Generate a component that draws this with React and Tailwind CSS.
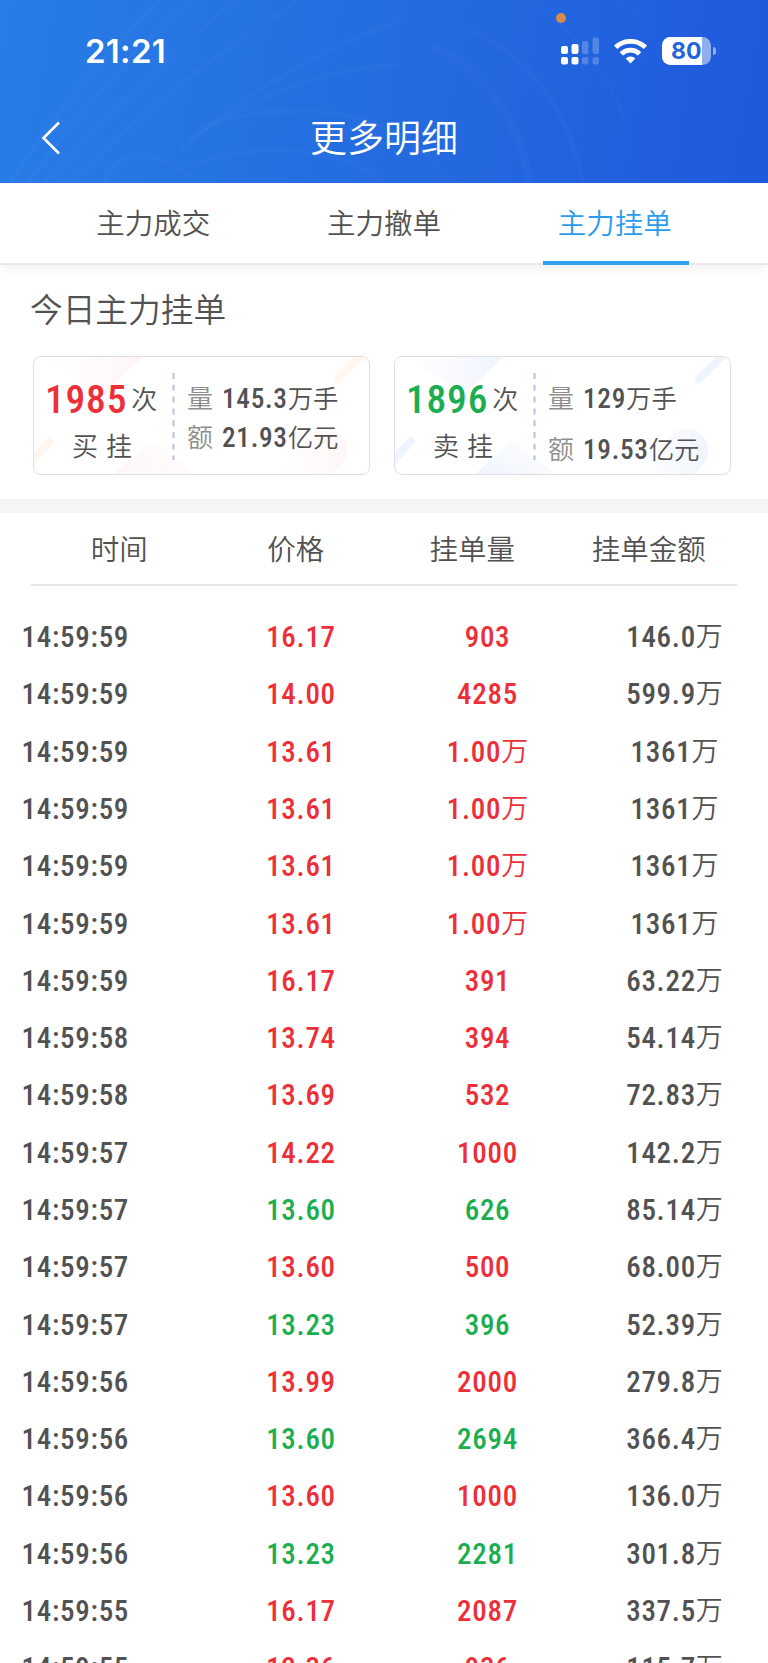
import React, { useState } from 'react';

const tabs = ['主力成交', '主力撤单', '主力挂单'];

const columns = ['时间', '价格', '挂单量', '挂单金额'];

const orders = [
  { time: '14:59:59', price: '16.17', volume: '903', amount: '146.0万', side: 'buy' },
  { time: '14:59:59', price: '14.00', volume: '4285', amount: '599.9万', side: 'buy' },
  { time: '14:59:59', price: '13.61', volume: '1.00万', amount: '1361万', side: 'buy' },
  { time: '14:59:59', price: '13.61', volume: '1.00万', amount: '1361万', side: 'buy' },
  { time: '14:59:59', price: '13.61', volume: '1.00万', amount: '1361万', side: 'buy' },
  { time: '14:59:59', price: '13.61', volume: '1.00万', amount: '1361万', side: 'buy' },
  { time: '14:59:59', price: '16.17', volume: '391', amount: '63.22万', side: 'buy' },
  { time: '14:59:58', price: '13.74', volume: '394', amount: '54.14万', side: 'buy' },
  { time: '14:59:58', price: '13.69', volume: '532', amount: '72.83万', side: 'buy' },
  { time: '14:59:57', price: '14.22', volume: '1000', amount: '142.2万', side: 'buy' },
  { time: '14:59:57', price: '13.60', volume: '626', amount: '85.14万', side: 'sell' },
  { time: '14:59:57', price: '13.60', volume: '500', amount: '68.00万', side: 'buy' },
  { time: '14:59:57', price: '13.23', volume: '396', amount: '52.39万', side: 'sell' },
  { time: '14:59:56', price: '13.99', volume: '2000', amount: '279.8万', side: 'buy' },
  { time: '14:59:56', price: '13.60', volume: '2694', amount: '366.4万', side: 'sell' },
  { time: '14:59:56', price: '13.60', volume: '1000', amount: '136.0万', side: 'buy' },
  { time: '14:59:56', price: '13.23', volume: '2281', amount: '301.8万', side: 'sell' },
  { time: '14:59:55', price: '16.17', volume: '2087', amount: '337.5万', side: 'buy' },
  { time: '14:59:55', price: '12.36', volume: '936', amount: '115.7万', side: 'buy' },
];

// Condensed Roboto digits, the unit behind them in the light CJK face
function Amount({ value }) {
  const [, digits, unit] = value.match(/^([\d.:]+)(.*)$/);
  return (
    <span className="inline-flex items-center">
      <span className="font-[Roboto,sans-serif] font-medium tracking-[0.025em] [font-stretch:85%]">{digits}</span>
      {unit && <span className="-mt-[4px] text-[0.93em] font-[350]">{unit}</span>}
    </span>
  );
}

function StatusBar() {
  return (
    <div className="relative flex h-[96px] items-center justify-between pl-[85px] pr-[52px] pt-[6px]">
      <span className="font-[Inter,sans-serif] text-[33px] font-semibold leading-none tracking-[0.3px]">21:21</span>
      <span className="absolute left-[556px] top-[13px] size-[10px] rounded-full bg-[#d98b4f]" />
      <div className="flex items-center">
        <svg width="39" height="28" viewBox="0 0 39 28" fill="#fff">
          <rect x="0" y="9" width="7" height="8" rx="2" />
          <rect x="10.5" y="7" width="7" height="10" rx="2" />
          <rect x="21" y="4" width="6.5" height="13" rx="2" opacity=".22" />
          <rect x="31.5" y="0.5" width="6.5" height="16.5" rx="2" opacity=".22" />
          <rect x="0" y="20" width="7" height="7.5" rx="2" />
          <rect x="10.5" y="20" width="7" height="7.5" rx="2" />
          <rect x="21" y="20" width="6.5" height="7.5" rx="2" opacity=".22" />
          <rect x="31.5" y="20" width="6.5" height="7.5" rx="2" opacity=".22" />
        </svg>
        <svg className="ml-[14px] mr-px" width="33" height="25" viewBox="0 0 33 25" fill="none" stroke="#fff" strokeWidth="4.8">
          <path d="M1.6 8.4a21.4 21.4 0 0 1 29.8 0" />
          <path d="M7.4 14.9a12.9 12.9 0 0 1 18.2 0" />
          <path d="M11.7 19.4a6.8 6.8 0 0 1 9.6 0L16.5 24.4Z" fill="#fff" stroke="none" />
        </svg>
        <div className="relative ml-[14px] flex h-[27.5px] w-[49px] items-center overflow-hidden rounded-[8.5px] bg-white/50">
          <div className="h-full w-[40px] bg-white" />
          <span className="absolute left-[9px] top-[2.5px] font-[Inter,sans-serif] text-[23px] font-bold leading-none text-[#2263de]">80</span>
        </div>
        <div className="ml-[2px] h-[8px] w-[3px] rounded-r-full bg-white/50" />
      </div>
    </div>
  );
}

function HeaderWaves() {
  return (
    <svg className="absolute inset-0" width="768" height="183" viewBox="0 0 768 183" fill="none" stroke="#fff" strokeOpacity=".02">
      <g strokeWidth="5">
        <path d="M10 183Q70 90 160 0" />
        <path d="M28 183Q110 70 190 0" />
        <path d="M45 183Q130 90 235 0" />
        <path d="M70 183Q160 90 300 0" />
        <path d="M105 183C110 150 160 145 195 183" />
        <path d="M180 150Q270 70 400 20" />
        <path d="M190 140Q290 70 400 65" />
        <path d="M190 165C250 145 330 140 385 183" />
        <path d="M200 125Q380 80 450 183" />
      </g>
      <path d="M430 45Q510 80 530 183" strokeWidth="8" />
      <path d="M470 30Q560 70 583 183" strokeWidth="6" />
      <path d="M530 0Q600 50 627 125" strokeWidth="3" />
      <path d="M620 0Q640 15 650 35" strokeWidth="3" />
    </svg>
  );
}

function CardArt({ tone }) {
  const warm = tone === 'buy';
  const main = warm ? '#fef5f6' : '#f0f5fd';
  const bar = warm ? '#fff7ef' : '#eef4fe';
  return (
    <svg className="absolute inset-0" width="335" height="117" viewBox="0 0 335 117">
      <defs>
        <linearGradient id={`top-${tone}`} x1="0" y1="0" x2="1" y2="0">
          <stop offset="0" stopColor={main} stopOpacity="0" />
          <stop offset="1" stopColor={main} />
        </linearGradient>
        <linearGradient id={`low-${tone}`} x1="1" y1="0" x2="0" y2="1">
          <stop offset="0" stopColor={main} stopOpacity="0" />
          <stop offset="1" stopColor={main} />
        </linearGradient>
      </defs>
      <path d="M10 0H109L68 38Z" fill={`url(#top-${tone})`} />
      <path d="M118 82L160 117H80Z" fill={`url(#low-${tone})`} />
      <path d="M243 117L272 83A22 22 0 1 1 306 110L298 117Z" fill={`url(#top-${tone})`} />
      <path d="M-6 108L16 84M304 22L332 -6" stroke={bar} strokeWidth="8" strokeLinecap="round" />
    </svg>
  );
}

function SummaryCard({ tone, count, label, volume, amount, spread }) {
  return (
    <div className="relative flex h-[119px] w-[337px] overflow-hidden rounded-[8px] border border-[#dedfe1] bg-white">
      <CardArt tone={tone} />
      <div className="relative w-[138px] pt-[24px]">
        <div className="flex h-[38px] items-center pl-[11px]">
          <span
            className={`font-[Roboto,sans-serif] text-[39.5px] font-medium leading-none tracking-[0.8px] [font-stretch:85%] ${
              tone === 'buy' ? 'text-[#ec2f38]' : 'text-[#1bae50]'
            }`}
          >
            {count}
          </span>
          <span className="-mt-[3px] ml-[4px] text-[26px] font-[350] leading-none">次</span>
        </div>
        <div className="pl-[38px] pt-[13px] text-[26px] font-[350] leading-none tracking-[8px]">{label}</div>
      </div>
      <svg className="relative mt-[15px] shrink-0" width="3" height="88" viewBox="0 0 3 88">
        <path d="M1.5 1V88" stroke="#b3c3da" strokeWidth="2" strokeDasharray="6 5.8" />
      </svg>
      <div className={`relative flex flex-col pl-[12px] pt-[23px] text-[27.3px] leading-none ${spread ? 'gap-[12px]' : ''}`}>
        <div className="flex h-[39px] items-center">
          <span className="-mt-[4px] mr-[9px] text-[26px] font-[350] text-[#8d8d8d]">量</span>
          <Amount value={volume} />
        </div>
        <div className="flex h-[39px] items-center">
          <span className="-mt-[4px] mr-[9px] text-[26px] font-[350] text-[#8d8d8d]">额</span>
          <Amount value={amount} />
        </div>
      </div>
    </div>
  );
}

export default function App() {
  const [active, setActive] = useState(2);

  return (
    <div className="h-[1663px] w-[768px] overflow-hidden bg-white font-['Noto_Sans_CJK_SC',sans-serif] text-[#525252]">
      {/* Header */}
      <header className="relative h-[182.5px] bg-linear-[100deg] from-[#287de6] via-[#246ce0] to-[#1f59dc] text-white">
        <HeaderWaves />
        <StatusBar />
        <div className="relative flex h-[84px] items-center justify-center">
          <button className="absolute left-[41px] top-[25px] cursor-pointer">
            <svg width="20" height="34" viewBox="0 0 20 34" fill="none" stroke="#fff" strokeWidth="2.6">
              <path d="M18 1.5L2.5 17L18 32.5" />
            </svg>
          </button>
          <h1 className="-mt-[3px] text-[37px] font-[350] leading-none">更多明细</h1>
        </div>
      </header>

      {/* Tabs */}
      <nav className="relative grid h-[82px] grid-cols-3 border-b-2 border-[#e8e8e8] pl-[38px] pr-[38px] shadow-[0_6px_12px_-4px_rgba(0,0,0,0.08)]">
        {tabs.map((tab, i) => (
          <button
            key={tab}
            onClick={() => setActive(i)}
            className={`relative cursor-pointer text-[28.5px] font-[350] leading-none ${i === active ? 'text-[#2b9ced]' : ''}`}
          >
            {tab}
            {i === active && <span className="absolute -bottom-[2px] left-[44px] h-[4px] w-[146px] bg-[#2f9eec]" />}
          </button>
        ))}
      </nav>

      {/* Today's summary */}
      <section className="h-[234px] px-[31px] pt-[27.5px]">
        <h2 className="-ml-px text-[32.7px] font-[350] leading-none">今日主力挂单</h2>
        <div className="flex gap-[24px] pl-[2px] pt-[31px]">
          <SummaryCard tone="buy" count="1985" label="买挂" volume="145.3万手" amount="21.93亿元" />
          <SummaryCard tone="sell" count="1896" label="卖挂" volume="129万手" amount="19.53亿元" spread />
        </div>
      </section>
      <div className="h-[14px] bg-[#f5f5f5]" />

      {/* Order list */}
      <div className="mx-[31px] grid h-[73.5px] grid-cols-4 items-center border-b-2 border-[#e6e6e6] text-center text-[28.5px] font-[350] leading-none">
        {columns.map((name) => (
          <span key={name}>{name}</span>
        ))}
      </div>
      <div className="pt-[21.5px]">
        {orders.map((order, i) => (
          <div key={i} className="grid h-[57.29px] grid-cols-[208px_186px_187px_187px] items-center text-center text-[29px] leading-none">
            <span className="pl-[21.5px] text-left">
              <Amount value={order.time} />
            </span>
            <span className={order.side === 'buy' ? 'text-[#ec2f38]' : 'text-[#1bae50]'}>
              <Amount value={order.price} />
            </span>
            <span className={order.side === 'buy' ? 'text-[#ec2f38]' : 'text-[#1bae50]'}>
              <Amount value={order.volume} />
            </span>
            <span>
              <Amount value={order.amount} />
            </span>
          </div>
        ))}
      </div>
    </div>
  );
}
